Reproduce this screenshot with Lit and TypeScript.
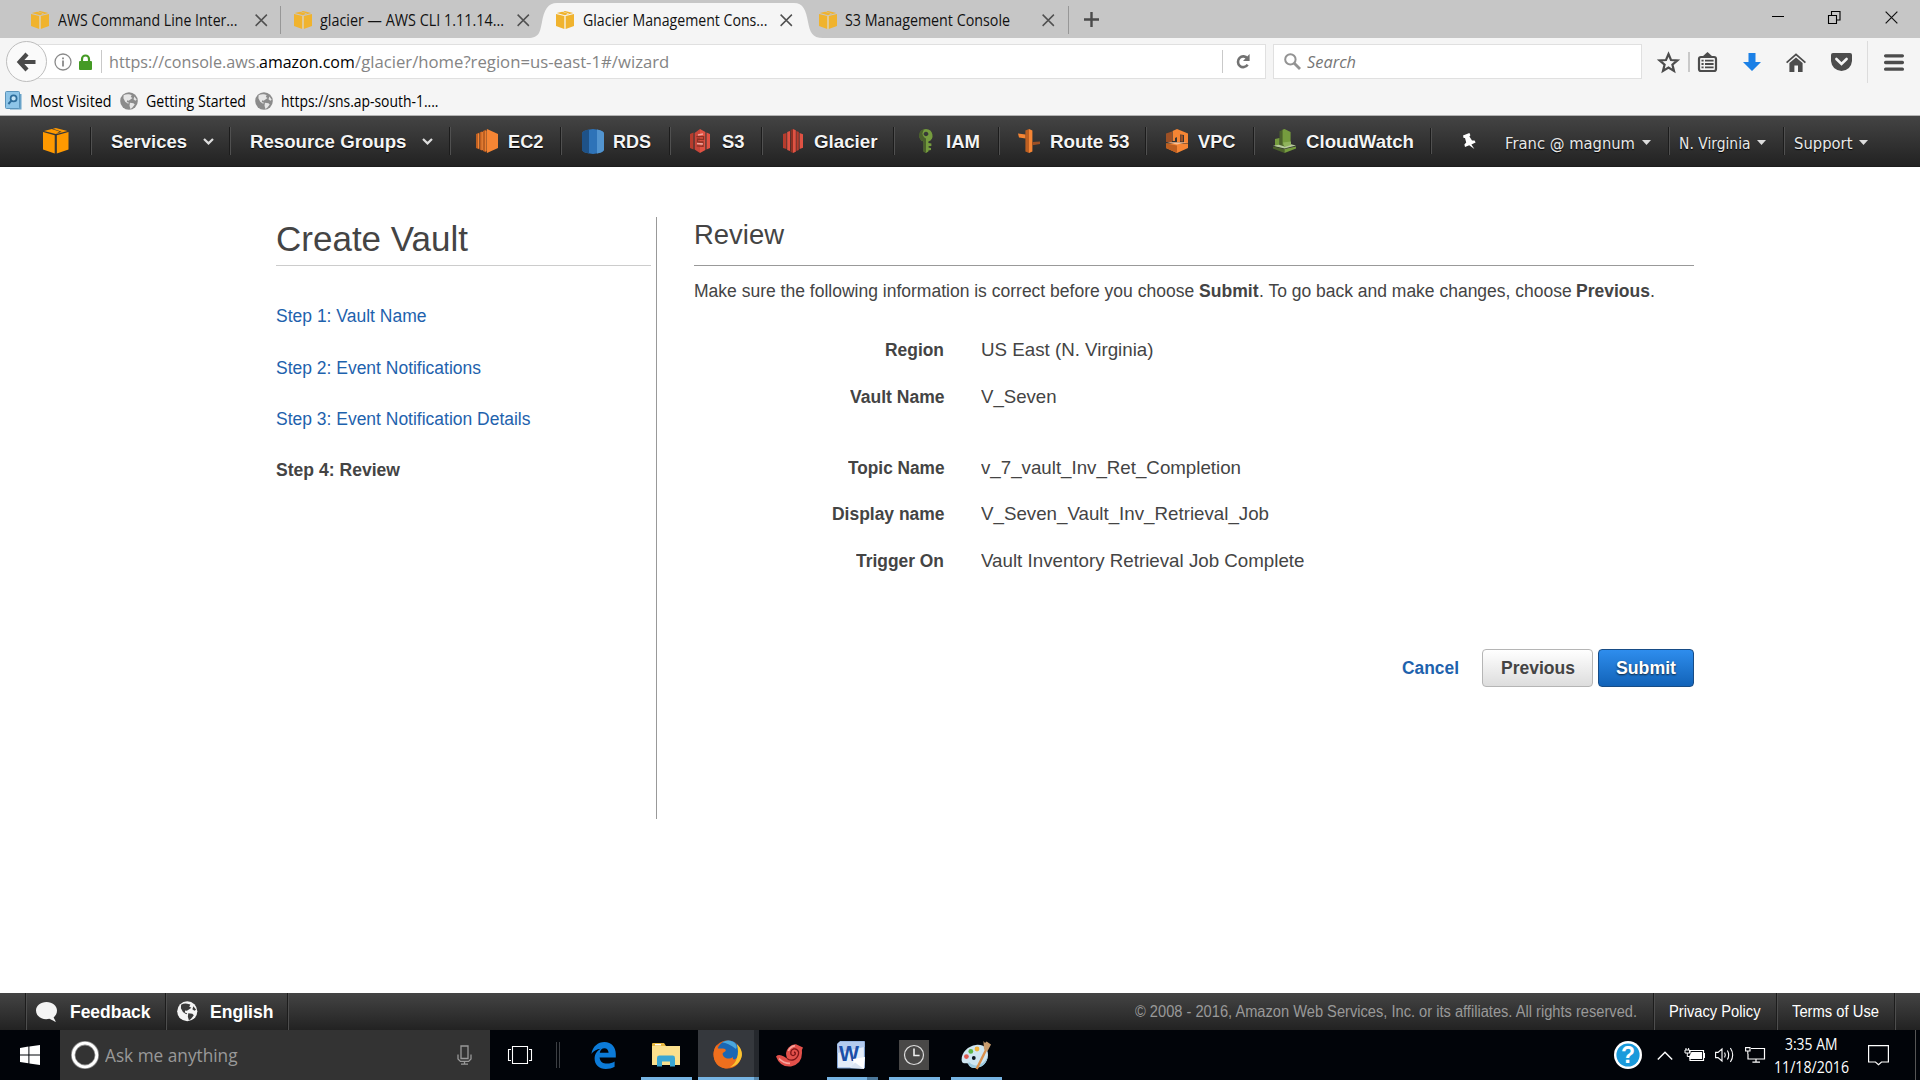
import { LitElement, html, css, svg, nothing } from "lit";
import type { TemplateResult } from "lit";
import { customElement, property, query } from "lit/decorators.js";
import { styleMap } from "lit/directives/style-map.js";

/** Single-line label whose glyphs are condensed or stretched to a given width. */
@customElement("fit-text")
class FitText extends LitElement {
  static styles = css`
    :host { display: inline-block; flex: none; white-space: pre; }
    .box { display: block; }
    .ink { display: inline-block; transform-origin: 0 50%; white-space: pre; }
  `;
  @property({ type: Number }) w = 0;
  @query(".ink") ink!: HTMLElement;
  private ratio = 1;

  firstUpdated() {
    const natural = this.ink.offsetWidth;
    if (natural && this.w) {
      this.ratio = this.w / this.ink.getBoundingClientRect().width;
      this.requestUpdate();
    }
  }
  render() {
    return html`<span class="box" style=${styleMap({ width: `${this.w}px` })}
      ><span class="ink" style=${styleMap({ transform: `scaleX(${this.ratio})` })}><slot></slot></span></span>`;
  }
}

const icon = (w: number, h: number, body: unknown, box = `0 0 ${w} ${h}`) =>
  html`<svg width=${w} height=${h} viewBox=${box} preserveAspectRatio="none">${body}</svg>`;

const cube = (w: number, h: number, main: string, line: string) =>
  icon(w, h, svg`
    <path d="M0 4.2 L11.5 7.3 V26 L0 21.8Z M13.5 7.3 L25 4.2 V21.8 L13.5 26Z" fill=${main}/>
    <path d="M1 3 L8.6 1 L16.2 3.6 L12.5 6.1Z M9.8 .8 L12.5 0 L24 3 L14 5.9 L12.6 5.9 L18.3 3.8Z" fill=${main}/>
    <path d="M12.5 7 V26" stroke=${line} stroke-width="1.2"/>`, "0 0 25 26");

const favicon = cube(18, 18, "#f0b32e", "#f7d78d");

const cross = (s = 12.5, c = "#505050", t = 1.4) =>
  icon(s, s, svg`<path d="M.6 .6 L11.4 11.4 M11.4 .6 L.6 11.4" stroke=${c} stroke-width=${t} fill="none"/>`, "0 0 12 12");

const globe = (bg: string, land: string, s: number) =>
  icon(s, s, svg`<circle cx="10" cy="10" r="9.8" fill=${bg}/>
    <path d="M4 3.6 Q7 2 10 2.6 L13 3.4 L12 5.5 L14 6.6 L11.6 8.2 L9.6 9.6 L8 9.2 L7.6 11.2 L10 12 L9 13 L5.8 10.8 L3.8 7Z M11 12 L15 12.5 L16.4 14 L13.6 17.6 L11.6 18.8 L10.6 15.4Z M16 5 L18.6 8.6 L17 9.6 L15 8Z" fill=${land}/>`, "0 0 20 20");

const ec2 = icon(22, 24, svg`<path d="M0 5 L3 3.8 V20.2 L0 19Z M3.6 3.4 L6.4 2.3 V21.7 L3.6 20.6Z M7 2 L10.5 .6 V23.4 L7 22Z" fill="#bd5f21"/>
  <path d="M11 0 L22 5 V19 L11 24Z" fill="#f58534"/><path d="M2.6 4.6V19.6M6.2 3V21M9.8 2V22" stroke="#f58534" stroke-width="1.3"/>`);
const rds = icon(22, 25, svg`<path d="M0 4.5 Q0 1 11 0 Q22 1 22 4.5 V20.5 Q22 24 11 25 Q0 24 0 20.5Z" fill="#2e73b8"/>
  <path d="M0 4.5 Q0 2 7 .5 V24.5 Q0 23 0 20.5Z" fill="#1e5288"/><path d="M15 .5 Q22 2 22 4.5 V20.5 Q22 23 15 24.5Z" fill="#5294cf"/>`);
const s3 = icon(20, 24, svg`<path d="M0 5 L3.5 3.6 V20.4 L0 19Z" fill="#b73c2d"/><path d="M4.6 4 L10 0 V24 L4.6 20.5Z" fill="#c9463a"/>
  <path d="M20 5 L16.5 3.6 V20.4 L20 19Z M10 0 L15.4 3 V21 L10 24Z" fill="#e05243"/>
  <path d="M6.4 7.6 H13.6 V10.5 L7.5 10 V13 H13 V17.4 L6.8 16.8" fill="none" stroke="#8c3123" stroke-width="1.3"/><path d="M7 14.5 L13 15 M8 6 L13 5" stroke="#efa69d" stroke-width="1.3"/>`);
const glacier = icon(20, 24, svg`<path d="M0 5 L3.5 4 V20 L0 19Z" fill="#b73c2d"/><path d="M4.2 3 L7 2 V22 L4.2 21Z" fill="#e05243"/><path d="M7.6 1 L10 0 V24 L7.6 23Z" fill="#8c3123"/>
  <path d="M10 0 L12.8 1.2 V22.8 L10 24Z M16.6 4 L20 5.2 V18.8 L16.6 20Z" fill="#e05243"/><path d="M13.4 2 L15.8 3 V21 L13.4 22Z" fill="#b73c2d"/>`);
const iam = icon(14, 24, svg`<path fill-rule="evenodd" d="M7 0 A7 6.6 0 0 1 9.4 12.6 V14 L12.4 14.6 V17 L9.6 17.2 V18.6 L12 19 V21 L9.4 21.6 V22.4 L7 24 L4.6 22.4 V12.6 A7 6.6 0 0 1 7 0Z M7 2.8 A2.4 2.2 0 1 0 7.01 2.8Z" fill="#759c3e"/>
  <path d="M7 9.4 V24 L4.6 22.4 V12.6 Q0 10.6 0 6.5 Q0 1.4 5 .3 L3.4 4.6 Q4 8.4 7 9.4Z" fill="#4b612c"/>`);
const route53 = icon(22, 24, svg`<path d="M0 4.4 L7.6 5.4 V9.6 L1 8.6Z" fill="#f58534"/><path d="M7.4 1.4 L11 0 V24 L7.4 22.6Z" fill="#bd5f21"/><path d="M11 0 L14.4 1.6 V22.4 L11 24Z" fill="#f58534"/><path d="M14.4 13 L22 12.4 V15 L14.4 16.2Z" fill="#9d5025"/>`);
const vpc = icon(22, 24, svg`<path d="M0 4.6 L6 2.6 V13 H0Z" fill="#9d5025"/><path d="M6.6 2 L11 0 V8 L9 9 V12 H6.6Z M11 0 L22 4.6 V14 H18 V6 L14 5.4 V13 H11Z" fill="#f58534"/>
  <path d="M0 14.6 H22 V19 L11 24 L0 19Z" fill="#f58534"/><path d="M0 14.6 L11 16.4 V24 L0 19Z" fill="#bd5f21"/><path d="M1 13.2 H21 L11 15.4Z" fill="#fbbf93"/><path d="M14.4 6 L17 6.6 V12.6 H14.4Z" fill="#9d5025"/>`);
const cloudwatch = icon(23, 24, svg`<path d="M6.5 2.2 L11.5 0 V18 L6.5 16.4Z" fill="#4b612c"/><path d="M9.6 .8 L11.5 0 L17.6 3 V15 L11.5 17 L9.6 16Z M2 10 L6.4 9 V18 L2 17Z" fill="#759c3e"/>
  <path d="M0 16.8 L6 15.8 L11.5 17.4 L17 15 L23 16.6 L11.5 19.4Z" fill="#b7ca9d"/><path d="M10 13.6 L18 12.6 V16 L11.5 18Z" fill="#8fb35c"/><path d="M0 17.4 L11.5 20 V24 L0 19.6Z" fill="#4b612c"/><path d="M11.5 20 L23 17.4 V19.6 L11.5 24Z" fill="#759c3e"/>`);

interface NavCell { label: string; w: number; cell: number; pad: number; gap: number; pic?: TemplateResult; }
const navCells: NavCell[] = [
  { label: "Services", w: 76, cell: 139, pad: 20, gap: 15.5 },
  { label: "Resource Groups", w: 156.5, cell: 220, pad: 20, gap: 15.5 },
  { label: "EC2", w: 35.5, cell: 111, pad: 26, gap: 10, pic: ec2 },
  { label: "RDS", w: 38, cell: 109, pad: 20.5, gap: 9.5, pic: rds },
  { label: "S3", w: 22.5, cell: 92, pad: 20, gap: 11.5, pic: s3 },
  { label: "Glacier", w: 63.5, cell: 132, pad: 20.5, gap: 11, pic: glacier },
  { label: "IAM", w: 34, cell: 104.5, pad: 25, gap: 13, pic: iam },
  { label: "Route 53", w: 79.5, cell: 147.5, pad: 19, gap: 10, pic: route53 },
  { label: "VPC", w: 37.5, cell: 108, pad: 20, gap: 9.5, pic: vpc },
  { label: "CloudWatch", w: 108, cell: 177, pad: 19, gap: 10, pic: cloudwatch },
];

const accountCells = [
  { label: "Franc @ magnum", w: 130, cell: 176, pad: 13.5, gap: 7 },
  { label: "N. Virginia", w: 71.5, cell: 115, pad: 10.5, gap: 6.5 },
  { label: "Support", w: 58.5, cell: 120, pad: 10.5, gap: 6 },
];

const steps = [
  { label: "Step 1: Vault Name", w: 150.5 },
  { label: "Step 2: Event Notifications", w: 205 },
  { label: "Step 3: Event Notification Details", w: 254.5 },
];

const review = [
  { label: "Region", lw: 59, value: "US East (N. Virginia)", vw: 172.5 },
  { label: "Vault Name", lw: 94.5, value: "V_Seven", vw: 75.5 },
  { label: "Topic Name", lw: 96.5, value: "v_7_vault_Inv_Ret_Completion", vw: 260, spaced: true },
  { label: "Display name", lw: 112.5, value: "V_Seven_Vault_Inv_Retrieval_Job", vw: 288 },
  { label: "Trigger On", lw: 88, value: "Vault Inventory Retrieval Job Complete", vw: 323.5 },
];

const px = (o: Record<string, number>) =>
  styleMap(Object.fromEntries(Object.entries(o).map(([k, v]) => [k, `${v}px`])));

@customElement("app-root")
class AppRoot extends LitElement {
  static styles = css`
    :host { display: flex; flex-direction: column; width: 1920px; height: 1080px; overflow: hidden; background: #fff;
      font-family: "Liberation Sans", Arial, sans-serif; color: #444; }
    * { box-sizing: border-box; }
    svg { display: block; flex: none; overflow: visible; }
    .segoe { font-family: "Open Sans", "Noto Sans", sans-serif; }

    .tabs { display: flex; height: 38px; background: #c6c6c6; font-size: 15.5px; line-height: 20px; color: #111; }
    .tab { position: relative; display: flex; align-items: center; padding-top: 2px; flex: none; }
    .tab > * { position: relative; }
    .tab .x { margin-left: auto; }
    .t1 { width: 281px; padding-left: 31px; padding-right: 14px; gap: 9px; }
    .t2 { width: 257px; padding-left: 13px; padding-right: 9px; gap: 8px; }
    .t3 { width: 277px; padding-left: 18px; padding-right: 23px; gap: 9px; }
    .t4 { width: 254px; padding-left: 4px; padding-right: 15px; gap: 8px; }
    .ruled::after { content: ""; position: absolute; right: 0; top: 6px; width: 1px; height: 28px; background: #979797; }
    .tab .shape { position: absolute; left: -10px; top: 0; }
    .newtab { padding: 12px 0 0 14.5px; }
    .window { display: flex; margin-left: auto; padding: 10.5px 22px 0 0; gap: 44px; }
    .window .min { margin-top: 5.5px; }

    .toolbar { display: flex; height: 46px; padding: 3px 0 0 6px; background: #f5f5f5; }
    .back { width: 41px; height: 41px; border: 1px solid #bdbdbd; border-radius: 50%; background: #fafafa; display: flex;
      align-items: center; justify-content: center; z-index: 1; flex: none; }
    .field { height: 35px; margin-top: 3px; background: #fff; border: 1px solid #e0e0e0; display: flex; align-items: center; flex: none; }
    .url { width: 1246px; margin-left: -27px; padding-left: 33px; font-size: 17px; line-height: 24px; color: #848484; }
    .url .dark { color: #000; }
    .url .lock { margin-left: 6.5px; }
    .rule { width: 1px; height: 23px; background: #c9c9c9; flex: none; }
    .url .r1 { margin: 0 6.7px 0 9.5px; }
    .url .r2 { margin-left: auto; margin-right: 13px; }
    .url .reload { margin-right: 15px; }
    .search { width: 369px; margin-left: 7px; padding-left: 10px; gap: 6px; font-size: 17px; line-height: 24px; color: #767676; }
    .search fit-text { font-style: italic; }
    .actions { display: grid; grid-template-columns: 30px 10px 45px 43px 45px 36px 17px 22px; align-items: center; padding: 0 0 4px 16px; }
    .actions .r3 { width: 2px; height: 20px; }
    .actions .r4 { height: 42px; background: #dcdcdc; }

    .bookmarks { display: flex; align-items: center; height: 32px; padding: 2px 0 0 5px; background: #f5f5f5; border-bottom: 1px solid #b4b4b4;
      font-size: 15.5px; line-height: 20px; color: #000; flex: none; }
    .bookmarks .t { margin: 0 9px 0 7.5px; position: relative; top: .8px; }
    .bookmarks .t.last { margin-left: 8.5px; }

    .aws { display: flex; align-items: center; height: 50.5px; background: linear-gradient(#444, #222); flex: none; color: #f4f4f4; border-bottom: 1px solid #1c1c1c;
      font-size: 18.5px; font-weight: bold; line-height: 24px; text-shadow: 0 1px 1px #000; }
    .aws .home { width: 90px; padding: 0 0 0 42.5px; }
    .cell { height: 28px; padding-top: 1px; display: flex; align-items: center; border-left: 1px solid #1c1c1c; box-shadow: inset 1px 0 #505050; flex: none; }
    .cell fit-text { padding-top: 2px; }
    .pin { width: 61.5px; height: 26px; padding: 5px 0 0 30px; border-left: 1px solid #1c1c1c; box-shadow: inset 1px 0 #505050; flex: none; }
    .account { font: 15px/24px "DejaVu Sans", Verdana, sans-serif; color: #e8e8e8; padding-top: 3px; }
    .account fit-text { padding-top: 4px; }
    .plain { border: 0; box-shadow: none; }

    .main { display: flex; flex: 1; padding: 50.5px 0 0 276px; }
    .side { width: 381px; height: 602px; border-right: 1px solid #999; flex: none; }
    .side h1 { margin: 0; width: 375px; height: 49px; border-bottom: 1px solid #ccc; font-size: 35px; font-weight: normal; line-height: 44px; }
    .steps { padding-top: 40.4px; display: flex; flex-direction: column; gap: 31.3px; font-size: 18px; line-height: 20px; color: #1e62ad; }
    .steps .now { font-weight: bold; color: #444; }
    .body { width: 1000px; margin-left: 37px; }
    .body h2 { margin: 0; height: 49px; border-bottom: 1px solid #999; font-size: 28px; font-weight: normal; line-height: 35.5px; }
    .hint { display: flex; padding: 14px 0 0 0; font-size: 18px; line-height: 22px; }
    .rows { display: flex; flex-direction: column; gap: 22.5px; padding-top: 36px; }
    .row { display: grid; grid-template-columns: 250px auto; column-gap: 36.6px; align-items: center; font-size: 18.5px; line-height: 24px; }
    .row.spaced { padding-top: 24.8px; }
    .row .k { justify-self: end; font-weight: bold; font-size: 18px; }
    .buttons { display: flex; justify-content: flex-end; align-items: center; margin-top: 76.5px; font-size: 18px; font-weight: bold; line-height: 22px; }
    .cancel { color: #1e62ad; margin-right: 23.5px; }
    .btn { height: 38px; display: flex; align-items: center; justify-content: center; border-radius: 4px; border: 1px solid #b5b5b5;
      background: linear-gradient(#fff, #ddd); }
    .prev { width: 111px; margin-right: 5px; }
    .submit { width: 96px; color: #fff; border-color: #174c86; background: linear-gradient(#2e8ded, #1263b8); text-shadow: 0 1px 2px #123; }

    .foot { display: flex; height: 37px; background: linear-gradient(#444, #222); color: #fff; font-size: 18px; font-weight: bold; flex: none; line-height: 22px; }
    .foot > div { display: flex; align-items: center; border-left: 1px solid #1c1c1c; box-shadow: inset 1px 0 #4d4d4d; }
    .foot .fb { width: 140px; margin-left: 25px; padding-left: 10px; gap: 13px; }
    .foot .en { width: 122px; padding-left: 11px; gap: 12.5px; }
    .foot .legal { width: 1366px; padding-right: 16px; justify-content: flex-end; font-size: 15.6px; font-weight: normal; color: #999; }
    .foot .link { font-size: 15.6px; font-weight: normal; }
    .foot .pp { width: 123px; padding-left: 15px; }
    .foot .tou { width: 118px; padding-left: 15px; }
    .foot .end { width: 26px; }

    .task { display: flex; height: 50px; background: #010409; color: #fff; flex: none; }
    .start { width: 60px; padding: 15px 0 0 20px; }
    .ask { width: 430px; background: #333; display: flex; align-items: center; padding: 0 18px 0 11px; color: #999; font-size: 18px; line-height: 24px; }
    .ask .t { margin-left: 5.5px; }
    .ask .mic { margin-left: auto; }
    .view { width: 66px; padding: 16px 0 0 18px; }
    .grip { width: 4px; height: 26px; margin: 12px 23px 0 0; border: solid #3c3f43; border-width: 0 1px; }
    .app { display: flex; align-items: center; justify-content: center; border-bottom: 3px solid transparent; padding-top: 3px; flex: none; }
    .open { border-bottom-color: #76b4e3; }
    .edge { width: 41px; margin-right: 17px; }
    .files { width: 51px; padding-right: 2px; }
    .ff { width: 56px; margin-left: 6px; background: #35383d; padding: 1px 0 0 3px; }
    .more { width: 5px; background: #25282d; border-bottom: 3px solid #5787ab; }
    .snail { width: 51px; margin-left: 5px; }
    .word { width: 40px; margin-left: 12px; padding-left: 8px; }
    .wmore { width: 11px; border-bottom: 3px solid #4b7799; }
    .clock { width: 51px; margin-left: 11px; padding-right: 2px; }
    .paint { width: 51px; margin-left: 11px; padding-right: 1px; }
    .tray { display: grid; grid-template-columns: 43px 28px 30px 30px 30px 93px 47px 5px; align-items: center; margin-left: auto; }
    .time { font-size: 15.5px; line-height: 23px; display: flex; flex-direction: column; align-items: center; width: 76px; margin-left: -1.5px; padding-top: 1px; }
    .peek { height: 50px; border-left: 1px solid #555; }
    .glyph { font: bold 23px "Liberation Sans", sans-serif; }
    .glyph-w { font: bold 22px "Liberation Sans", sans-serif; }
  `;

  private text(label: unknown, w: number, cls = "") {
    return html`<fit-text class=${cls} .w=${w}>${label}</fit-text>`;
  }

  private tabs() {
    return html`<div class="tabs segoe">
      <div class="tab t1 ruled">${favicon}${this.text("AWS Command Line Inter...", 179.5)}<span class="x">${cross()}</span></div>
      <div class="tab t2">${favicon}${this.text("glacier — AWS CLI 1.11.14...", 184)}<span class="x">${cross()}</span></div>
      <div class="tab t3">
        <svg class="shape" width="298" height="38" viewBox="528 0 298 38">
          <path d="M528 38 C540 38 540 31 542 22 C544 10 548 3 557 3 H794 C803 3 806 10 808 22 C810 32 812 38 823 38Z" fill="#f5f5f5"/>
        </svg>
        ${favicon}${this.text("Glacier Management Cons...", 184.5)}<span class="x">${cross()}</span>
      </div>
      <div class="tab t4 ruled">${favicon}${this.text("S3 Management Console", 165)}<span class="x">${cross()}</span></div>
      <div class="newtab">${icon(15, 15, svg`<path d="M7.5 0V15M0 7.5H15" stroke="#4a4a4a" stroke-width="2.4"/>`)}</div>
      <div class="window">
        <span class="min">${icon(12, 2, svg`<path d="M0 .5H12" stroke="#000"/>`)}</span>
        ${icon(13, 13, svg`<path d="M.5 4.5H8.5V12.5H.5Z M3.5 4V.5H12V9H9" fill="none" stroke="#000" stroke-width="1.1"/>`)}
        ${cross(13, "#111", 1.1)}
      </div>
    </div>`;
  }

  private toolbar() {
    return html`<div class="toolbar segoe">
      <div class="back">${icon(19, 20, svg`<path d="M10 2 L2.6 10 L10 18 M3 10H18.5" fill="none" stroke="#4a4a4a" stroke-width="4.2"/>`)}</div>
      <div class="field url">
        ${icon(18, 18, svg`<circle cx="9" cy="9" r="8" fill="none" stroke="#8a8a8a" stroke-width="1.3"/><path d="M9 7.6V13.4M9 4.4V6.2" stroke="#8a8a8a" stroke-width="1.8"/>`)}
        <span class="lock">${icon(13, 16, svg`<path d="M3 8V5 a3.5 3.5 0 0 1 7 0V8" fill="none" stroke="#449a24" stroke-width="2.2"/><rect y="7" width="13" height="9" rx="1" fill="#449a24"/>`)}</span>
        <span class="rule r1"></span>
        ${this.text("https://console.aws.", 150.7)}${this.text("amazon.com", 95.7, "dark")}${this.text("/glacier/home?region=us-east-1#/wizard", 314.3)}
        <span class="rule r2"></span>
        <span class="reload">${icon(14, 15, svg`<path d="M11.4 4.6 A5.2 5.4 0 1 0 11.6 10.6" fill="none" stroke="#727272" stroke-width="2.6"/><path d="M13.6 0V7H7Z" fill="#727272"/>`)}</span>
      </div>
      <div class="field search">
        ${icon(17, 17, svg`<circle cx="6.4" cy="6.4" r="5.2" fill="none" stroke="#939393" stroke-width="2"/><path d="M10 10 L16 16" stroke="#939393" stroke-width="2.8"/>`)}
        ${this.text("Search", 49)}
      </div>
      <div class="actions">
        ${icon(21, 21, svg`<path d="M10.5 2 L13 8 L19.4 8.4 L14.4 12.6 L16 19 L10.5 15.6 L5 19 L6.6 12.6 L1.6 8.4 L8 8Z" fill="none" stroke="#4c4c4c" stroke-width="2.2"/>`)}
        <span class="rule r3"></span>
        ${icon(19, 20, svg`<rect x="1" y="5" width="17" height="14" rx="2" fill="none" stroke="#4c4c4c" stroke-width="2.2"/><path d="M4.5 4.5 L9.5 0 L14.5 4.5Z" fill="#4c4c4c"/><path d="M3.5 8.6H5.6M7 8.6H15.6M3.5 12H5.6M7 12H15.6M3.5 15.4H5.6M7 15.4H15.6" stroke="#4c4c4c" stroke-width="1.8"/>`)}
        ${icon(18, 18, svg`<path d="M5.5 0H12.5V9H18L9 18L0 9H5.5Z" fill="#1b80e6"/>`)}
        ${icon(20, 19, svg`<path d="M.6 9.6 L10 1.4 L19.4 9.6" fill="none" stroke="#4c4c4c" stroke-width="1.8"/><path d="M3.4 10 L10 4.4 L16.6 10V19H12V12.6H8.4V19H3.4Z" fill="#4c4c4c"/>`)}
        ${icon(21, 18, svg`<path d="M2 0H19Q21 0 21 2V8Q20 17 10.5 18Q1 17 0 8V2Q0 0 2 0Z" fill="#4c4c4c"/><path d="M5.4 6 L10.5 11 L15.6 6" fill="none" stroke="#f5f5f5" stroke-width="2.6" stroke-linecap="round"/>`)}
        <span class="rule r4"></span>
        ${icon(20, 17, svg`<path d="M1.6 1.8H18.4M1.6 8.5H18.4M1.6 15.2H18.4" stroke="#4c4c4c" stroke-width="3.3" stroke-linecap="round"/>`)}
      </div>
    </div>
    <div class="bookmarks segoe">
      ${icon(17, 19, svg`<path d="M3 3H16.5V18.5H5Z" fill="#69a3c9"/><rect x=".5" y=".5" width="14" height="17" rx="1" fill="#8ec5e8" stroke="#5b94bb"/><circle cx="8.6" cy="7.4" r="3" fill="#c4e4f6" stroke="#2e6d9b" stroke-width="1.7"/><path d="M6.4 9.6 L3.4 13" stroke="#2e6d9b" stroke-width="2"/>`)}
      ${this.text("Most Visited", 81.5, "t")}
      ${globe("#8b8b8b", "#e6e6e6", 18)}${this.text("Getting Started", 100, "t")}
      ${globe("#8b8b8b", "#e6e6e6", 18)}${this.text("https://sns.ap-south-1....", 157.5, "t last")}
    </div>`;
  }

  private aws() {
    const chevron = icon(11, 7, svg`<path d="M1 1 L5.5 5.4 L10 1" fill="none" stroke="#ddd" stroke-width="2.2"/>`);
    const caret = icon(9, 5, svg`<path d="M0 0H9L4.5 5Z" fill="#ddd"/>`);
    return html`<div class="aws">
      <div class="home">${cube(25.5, 25.5, "#f90", "#3a3a3a")}</div>
      ${navCells.map((c) => html`<div class="cell" style=${px({ width: c.cell, "padding-left": c.pad, gap: c.gap })}>
        ${c.pic ?? nothing}${this.text(c.label, c.w)}${c.pic ? nothing : chevron}</div>`)}
      <div class="pin">${icon(15, 16, svg`<path d="M2 2.6 L8.4 0 L9.4 2.2 L8.4 3.4 L11 7.4 L13.6 7.4 L14.6 9.6 L10.4 11.4 L13.4 16 L8.2 12.2 L4 14 L3.4 11.4 L5.2 9.6 L4 5 L2.6 5Z" fill="#fff"/>`, "0 0 15 16")}</div>
      ${accountCells.map((c, i) => html`<div class="cell account ${i ? "" : "plain"}" style=${px({ width: c.cell, "padding-left": c.pad, gap: c.gap })}>
        ${this.text(c.label, c.w)}${caret}</div>`)}
    </div>`;
  }

  private main() {
    return html`<div class="main">
      <div class="side">
        <h1>${this.text("Create Vault", 192)}</h1>
        <div class="steps">
          ${steps.map((s) => this.text(s.label, s.w))}
          ${this.text("Step 4: Review", 124, "now")}
        </div>
      </div>
      <div class="body">
        <h2>${this.text("Review", 90)}</h2>
        <div class="hint">
          ${this.text("Make sure the following information is correct before you choose ", 505)}
          ${this.text(html`<b>Submit</b>`, 59.5)}
          ${this.text(". To go back and make changes, choose ", 317.5)}
          ${this.text(html`<b>Previous</b>`, 74)}${this.text(".", 5)}
        </div>
        <div class="rows">
          ${review.map((r) => html`<div class="row ${r.spaced ? "spaced" : ""}">
            ${this.text(r.label, r.lw, "k")}${this.text(r.value, r.vw)}</div>`)}
        </div>
        <div class="buttons">
          ${this.text("Cancel", 57, "cancel")}
          <div class="btn prev">${this.text("Previous", 74)}</div>
          <div class="btn submit">${this.text("Submit", 60)}</div>
        </div>
      </div>
    </div>
    <div class="foot">
      <div class="fb">${icon(21, 20, svg`<path d="M10.5 0 C16.5 0 21 3.6 21 8.6 C21 11.6 19.6 14 17.6 15.4 L20 20 L13.4 16.8 C6 18.4 0 14.4 0 8.6 C0 3.6 4.5 0 10.5 0Z" fill="#f4f4f4"/>`)}${this.text("Feedback", 80.5)}</div>
      <div class="en">${globe("#f4f4f4", "#3a3a3a", 20.5)}${this.text("English", 63.5)}</div>
      <div class="legal">${this.text("© 2008 - 2016, Amazon Web Services, Inc. or its affiliates. All rights reserved.", 502)}</div>
      <div class="link pp">${this.text("Privacy Policy", 91.5)}</div>
      <div class="link tou">${this.text("Terms of Use", 87)}</div>
      <div class="end"></div>
    </div>`;
  }

  private taskbar() {
    return html`<div class="task segoe">
      <div class="start">${icon(20, 20, svg`<path d="M0 3 L8.4 1.6V9.4H0Z M9.4 1.4 L20 0V9.4H9.4Z M0 10.4H8.4V18.2L0 17Z M9.4 10.4H20V20L9.4 18.4Z" fill="#fff"/>`)}</div>
      <div class="ask">
        ${icon(28, 28, svg`<circle cx="14" cy="14" r="11.8" fill="none" stroke="#8f8f8f" stroke-width="4.4"/><circle cx="14" cy="14" r="11.8" fill="none" stroke="#fff" stroke-width="2.8"/>`)}
        ${this.text("Ask me anything", 132.5, "t")}
        <span class="mic">${icon(15, 20, svg`<path d="M4 1H11V13.5H4Z M1 9.5V14L3.4 16.4H11.6L14 14V9.5 M7.5 16.4V19.4 M4 19.2H11" fill="none" stroke="#999" stroke-width="1.3"/>`)}</span>
      </div>
      <div class="view">${icon(24, 18, svg`<path d="M4.5 .5H19.5V17.5H4.5Z M3 3.5H.5V14.5H3 M21 3.5H23.5V14.5H21" fill="none" stroke="#fff" stroke-width="1.1"/>`)}</div>
      <div class="grip"></div>
      <div class="app edge">${icon(25, 27, svg`<path d="M.4 12 C1.6 4.4 7 0 13.4 0 C20.6 0 24.8 5.4 24.8 11.8 V15.4 H8.6 C9 19.8 12.2 21.6 16 21.6 C19 21.6 21.4 20.8 23.6 19.4 V24.8 C21 26.4 18 27 14.8 27 C8 27 3.6 23 3.6 16.6 C3.6 12.2 6 8.6 9.8 6.8 C5.6 7.2 2.2 9 .4 12Z M8.8 10.8 H17.6 C17.4 8 16 6.2 13.4 6.2 C10.8 6.2 9.2 8.2 8.8 10.8Z" fill="#0c7bd8" fill-rule="evenodd"/>`)}</div>
      <div class="app files open">${icon(28, 24, svg`<path d="M0 1 Q0 0 1 0H12L14 3H0Z" fill="#e8b93f"/><path d="M0 3H28V22H0Z" fill="#fbe08d"/><path d="M3 1H9V2.4H3Z" fill="#fff"/><path d="M5 23.6V15Q5 12.6 7.4 12.6H20.6Q23 12.6 23 15V23.6H18V18.4H10V23.6Z" fill="#3aa7d4"/>`)}</div>
      <div class="app ff open">${icon(29, 29, svg`<circle cx="14.5" cy="14.5" r="14" fill="#e8641b"/><circle cx="15.5" cy="12" r="11.4" fill="#1b67b4"/><path d="M9 2.6Q15 -1.4 21 2.2Q25 6 23 9Q15 3 9 2.6Z" fill="#4ba7dc"/>
        <path d="M3.6 5 L5 8.4 L10 8.4 C13.4 8.6 13.6 11 11 12 L9.6 13.6 C10 18.6 16 20 20 17 C19 21 24 20 25 15 C27 22 20 28.4 13 28.4 C5 28 .4 21.6 .6 14 C.8 10 2 7 3.6 5Z" fill="#ee6f1d"/>
        <path d="M23.8 4.2 C29.4 9 30 15 27.8 19 C25 25 21 26.6 17 27 C23.4 23.6 27 14 23.8 4.2Z" fill="#fbc531"/>`)}</div>
      <div class="more"></div>
      <div class="app snail">${icon(27, 23, svg`<path d="M0 12.4 Q3 9.6 8 12.6 L11 14.4 Q8.6 8 12.6 3.4 Q16 0 20 .2 L27 3.4 Q25.6 5 26 9 Q26 20 15 22.4 Q4 23.4 0 12.4Z" fill="#e2504a"/><path d="M11 14.4 Q14 17.4 18.6 15.4 Q23 12.6 22.6 8 Q21 4 17.4 5 Q14 6.6 15 10.4 Q17 12.8 19.2 10.4 Q19.6 8.4 18 8" fill="none" stroke="#7b1416" stroke-width="1.3"/><path d="M12.4 7 Q14 2.6 19 1.6 M3 14.6 Q8 19.6 14 19.4" fill="none" stroke="#f7a39c" stroke-width="1.6"/>`)}</div>
      <div class="app word open">${icon(28, 28, svg`<path d="M3 .5H27.4V27H.5V3Z" fill="#e4edf9" stroke="#7fa3d6"/><path d="M3 .5H27.4V6L.5 12V3Z" fill="#b3cbee"/><text class="glyph-w" x="2" y="20" textLength="20" lengthAdjust="spacingAndGlyphs" fill="#1c4fa8">W</text><path d="M16 18 L28 16 L27 28 L17 26Z" fill="#fff"/><path d="M13 27 L18 21.6 L27 28Z" fill="#dbe5f3"/>`)}</div>
      <div class="wmore"></div>
      <div class="app clock open">${icon(30, 30, svg`<rect width="30" height="30" fill="#494847"/><circle cx="15" cy="15" r="9.5" fill="none" stroke="#ddd" stroke-width="1.2"/><path d="M15 8.6V15.5H20.6" fill="none" stroke="#eee" stroke-width="1.6"/>`)}</div>
      <div class="app paint open">${icon(30, 28, svg`<path d="M15 4 C23 3 27 8 27 14 C27 22 20 27.4 13 27 C8 26.6 8.6 23 6.6 22.4 C4 22 1 23.4 .6 19 C.6 11 7 5 15 4Z" fill="#cfe6f2"/><path d="M8 21Q10 24 14 24.6Q22 24.6 26.6 16Q24.6 27 13 27Q8 26.6 7 22.6Z" fill="#9cc9de"/><circle cx="5.4" cy="15.6" r="2.4" fill="#df5a50"/><circle cx="9.8" cy="10.4" r="2.4" fill="#5cb548"/><circle cx="16" cy="8" r="2.4" fill="#f1b23c"/><circle cx="12.8" cy="17" r="1.9" fill="#0b1520"/><path d="M25 9 L15.6 28" stroke="#d98f4b" stroke-width="2.4"/><path d="M22.4 0 L24 2 L25.6 .6 L30 3.6 L26.6 10 L23 8.4Z" fill="#c89c6e"/>`)}</div>
      <div class="tray">
        ${icon(28, 28, svg`<circle cx="14" cy="14" r="14" fill="#fff"/><circle cx="14" cy="14" r="11.6" fill="#1a9adb"/><text class="glyph" x="14" y="22.2" text-anchor="middle" fill="#fff">?</text>`)}
        ${icon(16, 9, svg`<path d="M.8 8.4 L8 1.2 L15.2 8.4" fill="none" stroke="#fff" stroke-width="1.4"/>`)}
        ${icon(20, 14, svg`<path d="M5 5.5V2.5H18.5V12.5H5V9" fill="none" stroke="#fff" stroke-width="1.2"/><path d="M6.5 4H17V11H4.4V8Z M18.5 5H20V10H18.5Z" fill="#fff"/><path d="M1 0V2M3.6 0V2M0 2H4.6V5H0Z M2.3 5V8.5H5" fill="none" stroke="#fff" stroke-width="1"/>`)}
        ${icon(20, 16, svg`<path d="M.6 5.4H3L7 2V14L3 10.6H.6Z M9.6 5.4Q11 8 9.6 10.6 M12.4 3.4Q15 8 12.4 12.6 M15.4 1Q20 8 15.4 15" fill="none" stroke="#fff" stroke-width="1.1"/>`)}
        ${icon(20, 16, svg`<path d="M6 1.5H19.5V12H3V7 M11 12V15 M7.4 15.2H15" fill="none" stroke="#fff" stroke-width="1.2"/><path d="M.6 .6H5V4H.6Z M2.8 4V7" fill="none" stroke="#fff" stroke-width="1.1"/>`)}
        <div class="time">${this.text("3:35 AM", 52.5)}${this.text("11/18/2016", 75)}</div>
        ${icon(21, 20, svg`<path d="M.6 .6H20.4V17H13.5L10.5 19.6 L7.5 17H.6Z" fill="none" stroke="#fff" stroke-width="1.2"/>`)}
        <div class="peek"></div>
      </div>
    </div>`;
  }

  render() {
    return html`${this.tabs()}${this.toolbar()}${this.aws()}${this.main()}${this.taskbar()}`;
  }
}
